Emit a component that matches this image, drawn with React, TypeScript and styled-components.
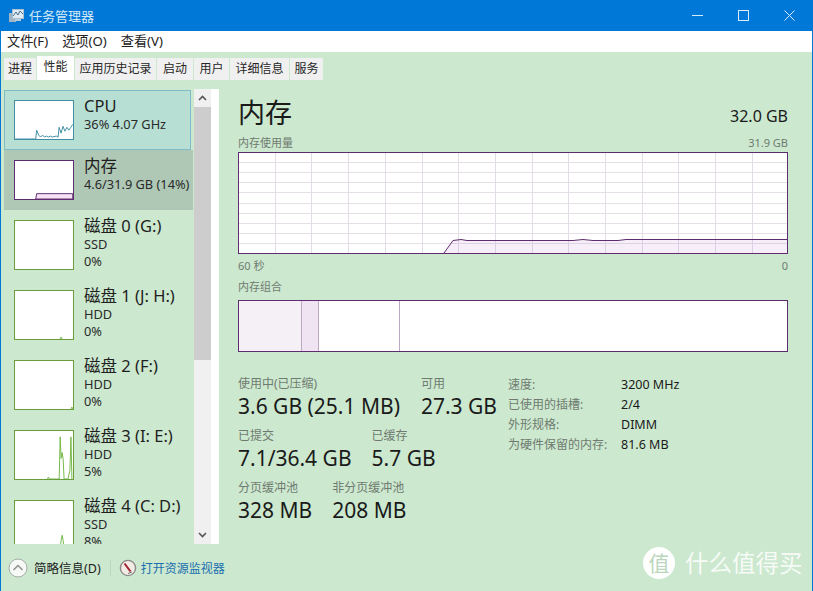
import React from "react";
import styled, { createGlobalStyle } from "styled-components";

const GlobalStyle = createGlobalStyle`
  html, body {
    margin: 0;
    padding: 0;
    background: #cce8cf;
  }
  body {
    font-family: "Noto Sans", "Noto Sans CJK SC", sans-serif;
    color: #1a1a1a;
  }
`;

const menus = ["文件(F)", "选项(O)", "查看(V)"];
const tabs = [
  { label: "进程", width: 33 },
  { label: "性能", width: 38, active: true },
  { label: "应用历史记录", width: 82 },
  { label: "启动", width: 37 },
  { label: "用户", width: 36 },
  { label: "详细信息", width: 60 },
  { label: "服务", width: 34 },
];

const PURPLE = "#5f2d6f";
const GREEN = "#6a9e3a";
const TEAL = "#3f8ea3";

const cpuLine =
  "0,39 21,39 22,30 24,35 26,37 28,35 30,37 32,36 34,37 36,36 38,37 42,36 44,37 45,27 47,33 49,26 51,31 53,27 55,30 57,27 59,24";
const disks = [
  { name: "磁盘 0 (G:)", kind: "SSD", use: "0%", line: "" },
  { name: "磁盘 1 (J: H:)", kind: "HDD", use: "0%", line: "46,49 47,47 48,49" },
  { name: "磁盘 2 (F:)", kind: "HDD", use: "0%", line: "57,49 58,47 59,49" },
  {
    name: "磁盘 3 (I: E:)",
    kind: "HDD",
    use: "5%",
    line: "33,49 34,47 35,49 45,49 46,6 47,28 48,22 49,28 50,49 54,49 56,40 57,6 58,49",
  },
  { name: "磁盘 4 (C: D:)", kind: "SSD", use: "8%", line: "46,49 47,40 48,35 49,40 50,49" },
];

const TaskIcon = () => (
  <svg width="17" height="16" viewBox="0 0 17 16" fill="none">
    <rect x="1" y="5" width="7" height="9" fill="#9fb4c4" />
    <rect x="4.5" y="1.5" width="11" height="9" fill="#dfeaf2" stroke="#a9c0d0" />
    <path d="M5 8 L8 4 L10 7 L12 3 L15 6" stroke="#46708c" strokeWidth="1" />
    <rect x="7" y="11" width="6" height="2" fill="#b9ccd9" />
  </svg>
);

const MinIcon = () => (
  <svg width="11" height="11" viewBox="0 0 11 11">
    <path d="M0 5.5H11" stroke="#d4ecfb" strokeWidth="1" />
  </svg>
);
const MaxIcon = () => (
  <svg width="11" height="11" viewBox="0 0 11 11" fill="none">
    <rect x="0.5" y="0.5" width="10" height="10" stroke="#d4ecfb" />
  </svg>
);
const CloseIcon = () => (
  <svg width="11" height="11" viewBox="0 0 11 11">
    <path d="M0.5 0.5L10.5 10.5M10.5 0.5L0.5 10.5" stroke="#d4ecfb" />
  </svg>
);

const FoldIcon = () => (
  <svg width="20" height="20" viewBox="0 0 20 20" fill="none">
    <circle cx="10" cy="10" r="9" fill="#f7f9f7" stroke="#a8aca8" />
    <path d="M5.5 12 L10 7.5 L14.5 12" stroke="#8a8e8a" strokeWidth="1.4" />
  </svg>
);

const MonitorIcon = () => (
  <svg width="18" height="18" viewBox="0 0 18 18" fill="none">
    <circle cx="9" cy="9" r="7.6" fill="#f2ece6" stroke="#8c8a86" strokeWidth="1.4" />
    <path d="M5.5 4.5 L11.5 12.5" stroke="#a3202c" strokeWidth="2" />
    <path d="M9 14.5 L13 13" stroke="#6d6d6d" strokeWidth="1" />
  </svg>
);

const Chevron = ({ up }: { up?: boolean }) => (
  <svg width="9" height="6" viewBox="0 0 9 6" fill="none">
    <path d={up ? "M1 5 L4.5 1.5 L8 5" : "M1 1 L4.5 4.5 L8 1"} stroke="#555" strokeWidth="1.6" />
  </svg>
);

const UsageChart = () => {
  const cols = Array.from({ length: 14 }, (_, i) => 36.7 * (i + 1));
  const rows = Array.from({ length: 9 }, (_, i) => 10.1 * (i + 1));
  const curve =
    "M206 101 L215 88.5 L223 87.5 L229 88.5 L335 88.5 L345 87.5 L355 88.5 L380 88.5 L388 87.5 L396 87.5 L549 87.5";
  return (
    <svg width="550" height="102" viewBox="0 0 550 102" style={{ display: "block" }}>
      <rect x="0.5" y="0.5" width="549" height="101" fill="#fff" />
      {rows.map((y) => (
        <path key={y} d={`M1 ${Math.round(y) + 0.5}H549`} stroke="#e6dfe8" />
      ))}
      {cols.map((x) => (
        <path key={x} d={`M${Math.round(x) + 0.5} 1V101`} stroke="#e4dce7" />
      ))}
      <path d={`${curve} L549 101 Z`} fill="#a050c0" fillOpacity="0.09" />
      <path d={curve} fill="none" stroke={PURPLE} />
      <rect x="0.5" y="0.5" width="549" height="101" fill="none" stroke={PURPLE} />
    </svg>
  );
};

const App = () => {
  return (
    <Window>
      <GlobalStyle />
      <TitleBar>
        <TaskIcon />
        <TitleText>任务管理器</TitleText>
        <WindowButtons>
          <WindowButton><MinIcon /></WindowButton>
          <WindowButton><MaxIcon /></WindowButton>
          <WindowButton><CloseIcon /></WindowButton>
        </WindowButtons>
      </TitleBar>

      <MenuBar>
        {menus.map((m) => (
          <MenuItem key={m}>{m}</MenuItem>
        ))}
      </MenuBar>

      <TabBar>
        {tabs.map((t) => (
          <Tab key={t.label} $active={t.active} $width={t.width}>
            {t.label}
          </Tab>
        ))}
      </TabBar>

      <Body>
        <Sidebar>
          <DeviceList>
            <Device $variant="selected">
              <Thumb $color={TEAL} $height={40}>
                <svg width="58" height="38" viewBox="0 0 59 39">
                  <polyline points={cpuLine} fill="none" stroke={TEAL} strokeWidth="1" />
                </svg>
              </Thumb>
              <div>
                <DeviceName>CPU</DeviceName>
                <DeviceSub>36% 4.07 GHz</DeviceSub>
              </div>
            </Device>
            <Device $variant="hover">
              <Thumb $color={PURPLE} $height={40}>
                <svg width="58" height="38" viewBox="0 0 59 39">
                  <path d="M21 39 L22 33.5 L59 33.5 L59 39 Z" fill="#f5e2f6" stroke={PURPLE} />
                </svg>
              </Thumb>
              <div>
                <DeviceName>内存</DeviceName>
                <DeviceSub>4.6/31.9 GB (14%)</DeviceSub>
              </div>
            </Device>
            {disks.map((d) => (
              <Device key={d.name} $variant="disk">
                <Thumb $color={GREEN} $height={50}>
                  <svg width="58" height="48" viewBox="0 0 59 49">
                    {d.line && <polyline points={d.line} fill="none" stroke="#74b84a" strokeWidth="1" />}
                  </svg>
                </Thumb>
                <div>
                  <DeviceName>{d.name}</DeviceName>
                  <DeviceSub>{d.kind}</DeviceSub>
                  <DeviceSub>{d.use}</DeviceSub>
                </div>
              </Device>
            ))}
          </DeviceList>
          <ScrollTrack>
            <ScrollButton><Chevron up /></ScrollButton>
            <ScrollThumb />
            <ScrollSpacer />
            <ScrollButton><Chevron /></ScrollButton>
          </ScrollTrack>
          <Gutter />
        </Sidebar>

        <Main>
          <Header>
            <PageTitle>内存</PageTitle>
            <Capacity>32.0 GB</Capacity>
          </Header>
          <CaptionRow>
            <span>内存使用量</span>
            <span>31.9 GB</span>
          </CaptionRow>
          <UsageChart />
          <AxisRow>
            <span>60 秒</span>
            <span>0</span>
          </AxisRow>
          <CompositionLabel>内存组合</CompositionLabel>
          <Composition>
            <Segment $width={63} $bg="#f4f0f5" $divider />
            <Segment $width={17} $bg="#f0e4f2" $divider />
            <Segment $width={81} $bg="#fff" $divider />
            <Segment $width={387} $bg="#fff" />
          </Composition>

          <Stats>
            <StatColumn>
              <StatRow $gap={21}>
                <Stat label="使用中(已压缩)" value="3.6 GB (25.1 MB)" />
                <Stat label="可用" value="27.3 GB" />
              </StatRow>
              <StatRow $gap={20}>
                <Stat label="已提交" value="7.1/36.4 GB" />
                <Stat label="已缓存" value="5.7 GB" />
              </StatRow>
              <StatRow $gap={20}>
                <Stat label="分页缓冲池" value="328 MB" />
                <Stat label="非分页缓冲池" value="208 MB" />
              </StatRow>
            </StatColumn>
            <SpecTable>
              <SpecKey>速度:</SpecKey>
              <SpecValue>3200 MHz</SpecValue>
              <SpecKey>已使用的插槽:</SpecKey>
              <SpecValue>2/4</SpecValue>
              <SpecKey>外形规格:</SpecKey>
              <SpecValue>DIMM</SpecValue>
              <SpecKey>为硬件保留的内存:</SpecKey>
              <SpecValue>81.6 MB</SpecValue>
            </SpecTable>
          </Stats>
        </Main>
      </Body>

      <Footer>
        <FoldIcon />
        <FooterText>简略信息(D)</FooterText>
        <FooterDivider />
        <MonitorIcon />
        <FooterLink>打开资源监视器</FooterLink>
      </Footer>

      <Watermark>
        <WatermarkBadge>值</WatermarkBadge>
        <WatermarkText>什么值得买</WatermarkText>
      </Watermark>
    </Window>
  );
};

const Stat = ({ label, value }: { label: string; value: string }) => (
  <div>
    <StatLabel>{label}</StatLabel>
    <StatValue>{value}</StatValue>
  </div>
);

const Window = styled.div`
  position: relative;
  width: 813px;
  height: 591px;
  box-sizing: border-box;
  overflow: hidden;
  display: flex;
  flex-direction: column;
  background: #cce8cf;
  border-left: 1px solid #0078d7;
  border-right: 1px solid #0078d7;
`;

const TitleBar = styled.div`
  height: 31px;
  flex-shrink: 0;
  display: flex;
  align-items: center;
  padding-left: 7px;
  background: #0078d7;
`;

const TitleText = styled.span`
  margin-left: 4px;
  font-size: 13px;
  color: #d3e9f8;
`;

const WindowButtons = styled.div`
  margin-left: auto;
  display: flex;
`;

const WindowButton = styled.div`
  width: 46px;
  height: 31px;
  display: flex;
  align-items: center;
  justify-content: center;
`;

const MenuBar = styled.div`
  height: 21px;
  flex-shrink: 0;
  display: flex;
  align-items: center;
  gap: 14px;
  padding-left: 6px;
  background: #fff;
`;

const MenuItem = styled.span`
  font-size: 13.2px;
  line-height: 21px;
  color: #222;
`;

const TabBar = styled.div`
  height: 28px;
  flex-shrink: 0;
  display: flex;
  align-items: flex-end;
  padding-left: 3px;
  gap: 1px;
`;

const Tab = styled.div<{ $active?: boolean; $width: number }>`
  width: ${(p) => p.$width - 1}px;
  height: ${(p) => (p.$active ? 24 : 22)}px;
  line-height: ${(p) => (p.$active ? 21 : 22)}px;
  text-align: center;
  font-size: 12px;
  color: #262626;
  background: ${(p) => (p.$active ? "#fff" : "#f0f0f0")};
`;

const Body = styled.div`
  flex: 1;
  min-height: 0;
  display: flex;
`;

const Sidebar = styled.div`
  width: 218px;
  flex-shrink: 0;
  display: flex;
  padding-top: 10px;
  box-sizing: border-box;
`;

const DeviceList = styled.div`
  width: 190px;
  margin-left: 3px;
  overflow: hidden;
`;

const Device = styled.div<{ $variant: "selected" | "hover" | "disk" }>`
  box-sizing: border-box;
  display: flex;
  gap: 10px;
  padding: ${(p) => (p.$variant === "selected" ? "9px 0 0 9px" : "10px 0 0 10px")};
  height: ${(p) => (p.$variant === "disk" ? 70 : 60)}px;
  width: ${(p) => (p.$variant === "selected" ? "187px" : "190px")};
  background: ${(p) =>
    p.$variant === "selected" ? "#b8dfd4" : p.$variant === "hover" ? "#afc8b5" : "transparent"};
  border: ${(p) => (p.$variant === "selected" ? "1px solid #7fbcc8" : "none")};
`;

const Thumb = styled.div<{ $color: string; $height: number }>`
  width: 60px;
  height: ${(p) => p.$height}px;
  box-sizing: border-box;
  flex-shrink: 0;
  background: #fff;
  border: 1px solid ${(p) => p.$color};

  svg {
    display: block;
  }
`;

const DeviceName = styled.div`
  font-size: 16.5px;
  line-height: 20px;
  margin-top: -4px;
  color: #1f1f1f;
  white-space: nowrap;
`;

const DeviceSub = styled.div`
  font-size: 12.8px;
  line-height: 17px;
  color: #2a2a2a;
  white-space: nowrap;
`;

const ScrollTrack = styled.div`
  width: 17px;
  margin-left: 1px;
  margin-top: -1px;
  display: flex;
  flex-direction: column;
  background: #f0f0f0;
`;

const ScrollButton = styled.div`
  height: 18px;
  flex-shrink: 0;
  display: flex;
  align-items: center;
  justify-content: center;
`;

const ScrollThumb = styled.div`
  height: 253px;
  flex-shrink: 0;
  background: #cdcdcd;
`;

const ScrollSpacer = styled.div`
  flex: 1;
`;

const Gutter = styled.div`
  width: 8px;
  margin-top: -1px;
  background: #fff;
`;

const Main = styled.div`
  flex: 1;
  min-width: 0;
  box-sizing: border-box;
  padding: 15px 24px 0 19px;
`;

const Header = styled.div`
  height: 36px;
  display: flex;
  align-items: center;
  justify-content: space-between;
`;

const PageTitle = styled.div`
  font-size: 27px;
  line-height: 36px;
  color: #1a1a1a;
`;

const Capacity = styled.div`
  font-size: 16px;
  line-height: 20px;
  margin-top: 6px;
  color: #1a1a1a;
`;

const CaptionRow = styled.div`
  display: flex;
  justify-content: space-between;
  height: 18px;
  margin-top: 3px;
  font-size: 11px;
  line-height: 18px;
  color: #6f7b70;
`;

const AxisRow = styled.div`
  display: flex;
  justify-content: space-between;
  padding-top: 2px;
  height: 20px;
  font-size: 11px;
  line-height: 20px;
  color: #6f7b70;
`;

const CompositionLabel = styled.div`
  height: 18px;
  margin-top: 2px;
  font-size: 11px;
  line-height: 18px;
  color: #6f7b70;
`;

const Composition = styled.div`
  display: flex;
  box-sizing: border-box;
  width: 550px;
  height: 52px;
  margin-top: 4px;
  border: 1px solid ${PURPLE};
  background: #fff;
`;

const Segment = styled.div<{ $width: number; $bg: string; $divider?: boolean }>`
  box-sizing: border-box;
  width: ${(p) => p.$width}px;
  background: ${(p) => p.$bg};
  border-right: ${(p) => (p.$divider ? "1px solid #bda9c4" : "none")};
`;

const Stats = styled.div`
  display: flex;
  margin-top: 23px;
`;

const StatColumn = styled.div`
  width: 270px;
  flex-shrink: 0;
  display: flex;
  flex-direction: column;
  gap: 7px;
`;

const StatRow = styled.div<{ $gap: number }>`
  display: flex;
  gap: ${(p) => p.$gap}px;
`;

const StatLabel = styled.div`
  font-size: 12px;
  line-height: 17px;
  color: #6f7b70;
  white-space: nowrap;
`;

const StatValue = styled.div`
  font-size: 21px;
  line-height: 28px;
  color: #1a1a1a;
  white-space: nowrap;
`;

const SpecTable = styled.div`
  display: grid;
  grid-template-columns: 113px auto;
  grid-auto-rows: 20px;
  align-content: start;
`;

const SpecKey = styled.div`
  font-size: 12px;
  line-height: 20px;
  color: #6f7b70;
  white-space: nowrap;
`;

const SpecValue = styled.div`
  font-size: 12.5px;
  line-height: 20px;
  color: #1a1a1a;
`;

const Footer = styled.div`
  height: 47px;
  flex-shrink: 0;
  display: flex;
  align-items: center;
  padding-left: 7px;
`;

const FooterText = styled.span`
  margin-left: 6px;
  font-size: 12.5px;
  color: #222;
`;

const FooterDivider = styled.div`
  width: 1px;
  height: 16px;
  margin: 0 8px 0 9px;
  background: #bcd6bf;
`;

const FooterLink = styled.span`
  margin-left: 4px;
  font-size: 12px;
  color: #1a6fae;
`;

const Watermark = styled.div`
  position: absolute;
  left: 642px;
  top: 547px;
  display: flex;
  align-items: center;
  gap: 10px;
`;

const WatermarkBadge = styled.div`
  width: 32px;
  height: 32px;
  border-radius: 50%;
  background: #fff;
  color: #b9d6bd;
  font-size: 21px;
  line-height: 32px;
  text-align: center;
`;

const WatermarkText = styled.span`
  font-size: 23.5px;
  line-height: 32px;
  color: rgba(255, 255, 255, 0.85);
  white-space: nowrap;
`;

export default App;
